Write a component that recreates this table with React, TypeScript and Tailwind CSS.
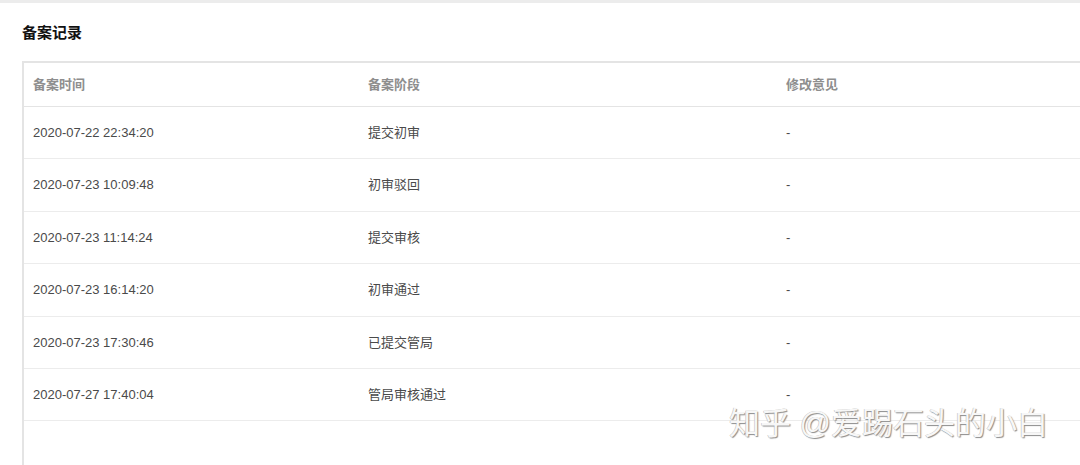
const records = [
  { time: "2020-07-22 22:34:20", stage: "提交初审", note: "-" },
  { time: "2020-07-23 10:09:48", stage: "初审驳回", note: "-" },
  { time: "2020-07-23 11:14:24", stage: "提交审核", note: "-" },
  { time: "2020-07-23 16:14:20", stage: "初审通过", note: "-" },
  { time: "2020-07-23 17:30:46", stage: "已提交管局", note: "-" },
  { time: "2020-07-27 17:40:04", stage: "管局审核通过", note: "-" },
];

export default function App() {
  return (
    <div
      className="relative w-[1080px] h-[465px] overflow-hidden bg-white border-t-[3px] border-[#ececec]"
      style={{ fontFamily: '"Liberation Sans", "Noto Sans CJK SC", sans-serif' }}
    >
      {/* 标题 */}
      <h2 className="pl-[22px] pt-[20px] h-[58px] text-[15px] font-bold text-[#111] leading-[20px]">
        备案记录
      </h2>

      {/* 表格 */}
      <div className="ml-[22px] border-l-2 border-t-2 border-[#e4e4e4] h-[420px]">
        <div className="grid grid-cols-[333px_418px_1fr] h-[44px] items-center border-b border-[#e4e4e4] text-[13px] font-bold text-[#8e8e8e]">
          <div className="pl-[9px]">备案时间</div>
          <div className="pl-[11px]">备案阶段</div>
          <div className="pl-[11px]">修改意见</div>
        </div>
        {records.map((r) => (
          <div
            key={r.time}
            className="grid grid-cols-[333px_418px_1fr] h-[52.4px] items-center border-b border-[#ececec] text-[13px] text-[#4a4a4a]"
          >
            <div className="pl-[9px]">{r.time}</div>
            <div className="pl-[11px]">{r.stage}</div>
            <div className="pl-[11px]">{r.note}</div>
          </div>
        ))}
      </div>

      {/* 水印 */}
      <div
        className="absolute left-[729px] top-[401px] text-[31px] leading-[40px] text-[#f7f7f7] whitespace-nowrap"
        style={{ textShadow: "1px 1px 1px #8c8c8c, -0.5px -0.5px 0 #bdbdbd" }}
      >
        知乎 @爱踢石头的小白
      </div>
    </div>
  );
}
